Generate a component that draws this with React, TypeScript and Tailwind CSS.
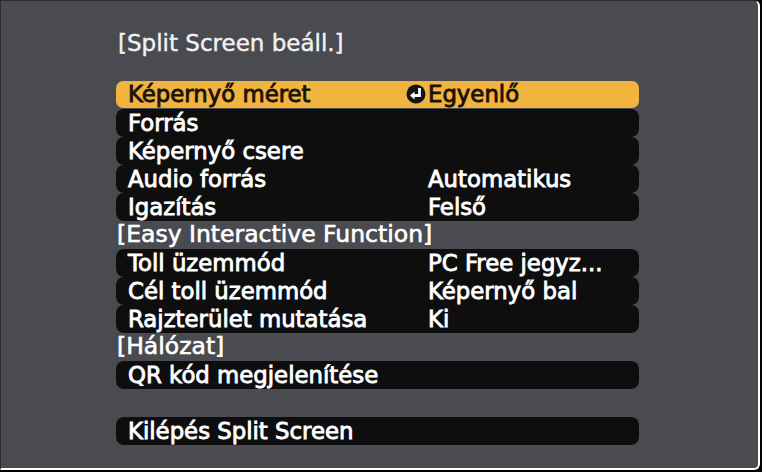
import React from "react";

type Row =
  | { kind: "item"; label: string; value?: string; selected?: boolean }
  | { kind: "header"; label: string }
  | { kind: "gap" };

const rows: Row[] = [
  { kind: "item", label: "Képernyő méret", value: "Egyenlő", selected: true },
  { kind: "item", label: "Forrás" },
  { kind: "item", label: "Képernyő csere" },
  { kind: "item", label: "Audio forrás", value: "Automatikus" },
  { kind: "item", label: "Igazítás", value: "Felső" },
  { kind: "header", label: "[Easy Interactive Function]" },
  { kind: "item", label: "Toll üzemmód", value: "PC Free jegyz..." },
  { kind: "item", label: "Cél toll üzemmód", value: "Képernyő bal" },
  { kind: "item", label: "Rajzterület mutatása", value: "Ki" },
  { kind: "header", label: "[Hálózat]" },
  { kind: "item", label: "QR kód megjelenítése" },
  { kind: "gap" },
  { kind: "item", label: "Kilépés Split Screen" },
];

const EnterIcon = () => (
  <svg width="20" height="20" viewBox="0 0 20 20" className="shrink-0">
    <circle cx="10" cy="10" r="9.5" fill="#141414" />
    <path d="M13.5 4 V11.5 H7.5" stroke="#fff" strokeWidth="2.8" fill="none" strokeLinejoin="miter" />
    <path d="M4 11.5 L8.5 7.5 V15.5 Z" fill="#fff" />
  </svg>
);

export default function App() {
  return (
    <div className="w-[762px] h-[472px] bg-black overflow-hidden" style={{ fontFamily: '"DejaVu Sans", sans-serif' }}>
      <div className="w-[760px] h-[470px] bg-[#4a4b50] border-t border-l border-[#2c2c30] border-r-2 border-b-2 border-r-white border-b-white rounded-tr-[6px] rounded-br-[6px]">
        <div className="pl-[117px] pt-[31px] h-[80px] text-[23px] leading-none text-[#f2f2f2] [-webkit-text-stroke:0.4px_#f2f2f2]">
          [Split Screen beáll.]
        </div>
        <div className="ml-[115px] w-[523px] flex flex-col">
          {rows.map((row, i) => {
            if (row.kind === "gap") return <div key={i} className="h-[28px]" />;
            if (row.kind === "header")
              return (
                <div key={i} className="h-[28px] flex items-center pl-[1px] text-[23.5px] leading-none text-white [-webkit-text-stroke:0.6px_#ffffff]">
                  {row.label}
                </div>
              );
            return (
              <div
                key={i}
                className={
                  row.selected
                    ? "h-[27px] mb-[1px] rounded-[7px] bg-[#f1b43f] text-[#1a1208] flex items-center text-[22.8px] leading-none [-webkit-text-stroke:0.85px_#1a1208]"
                    : "h-[28px] rounded-[8px] bg-[#0e0e0f] text-white flex items-center text-[22.8px] leading-none [-webkit-text-stroke:0.85px_#ffffff]"
                }
              >
                <span className="pl-[12px] w-[290px]">{row.label}</span>
                <span className="flex items-center">
                  {row.selected ? <EnterIcon /> : <span className="w-[20px]" />}
                  <span className="pl-[2px]">{row.value ?? ""}</span>
                </span>
              </div>
            );
          })}
        </div>
      </div>
    </div>
  );
}
